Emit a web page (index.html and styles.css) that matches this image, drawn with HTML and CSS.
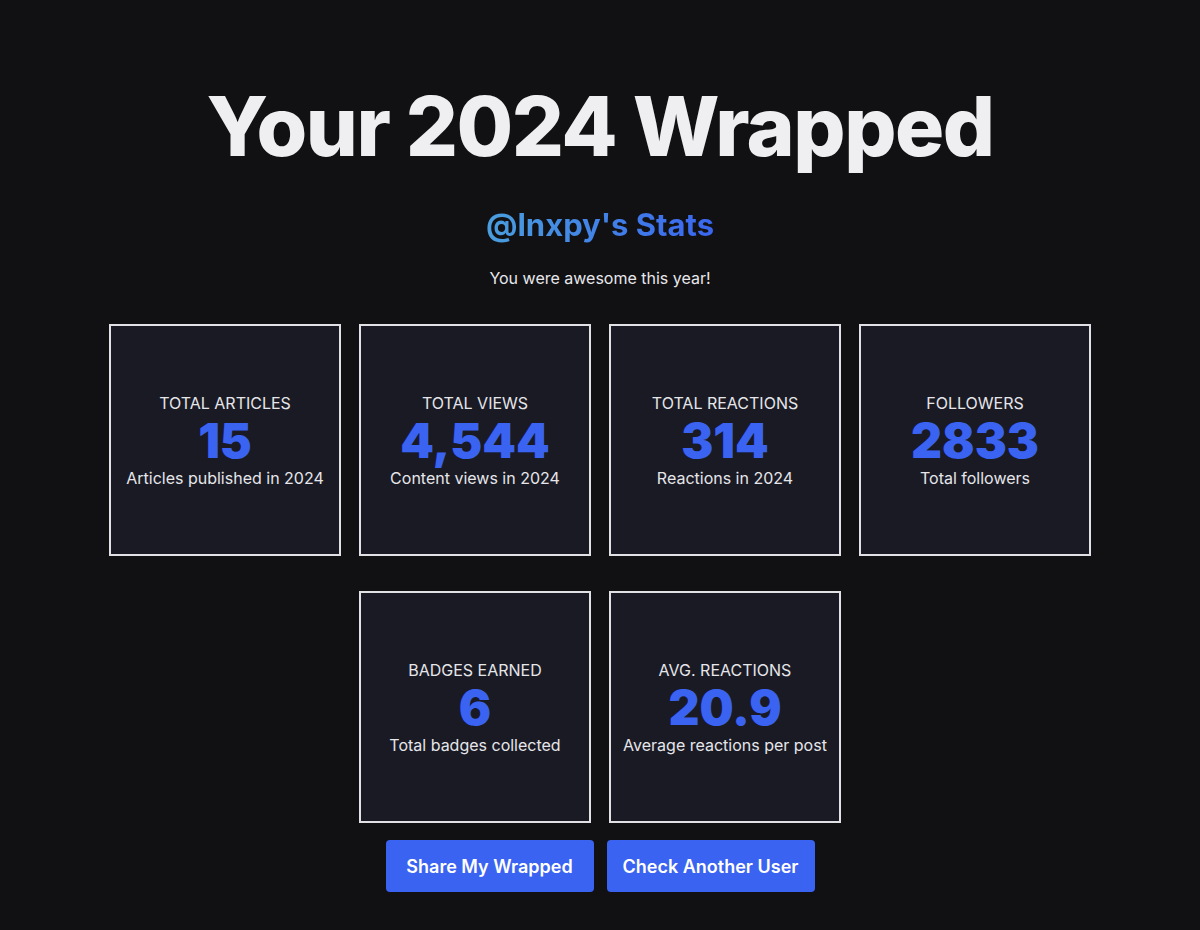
FILE: index.html
```html
<!DOCTYPE html>
<html lang="en">
<head>
    <meta charset="UTF-8">
    <meta name="viewport" content="width=device-width, initial-scale=1.0">
    <title>Your 2024 Wrapped</title>
    <link rel="stylesheet" href="styles.css">
</head>
<body>
    <div class="container">
        <h1 class="title">Your 2024 Wrapped</h1>
        <h2 class="username">@lnxpy's Stats</h2>
        <p class="tagline">You were awesome this year!</p>

        <!-- Stats -->
        <div class="stats">
            <div class="stat-card">
                <div class="stat-label">Total Articles</div>
                <div class="stat-value">15</div>
                <div class="stat-desc">Articles published in 2024</div>
            </div>
            <div class="stat-card">
                <div class="stat-label">Total Views</div>
                <div class="stat-value">4,544</div>
                <div class="stat-desc">Content views in 2024</div>
            </div>
            <div class="stat-card">
                <div class="stat-label">Total Reactions</div>
                <div class="stat-value">314</div>
                <div class="stat-desc">Reactions in 2024</div>
            </div>
            <div class="stat-card">
                <div class="stat-label">Followers</div>
                <div class="stat-value">2833</div>
                <div class="stat-desc">Total followers</div>
            </div>
            <div class="stat-card">
                <div class="stat-label">Badges Earned</div>
                <div class="stat-value">6</div>
                <div class="stat-desc">Total badges collected</div>
            </div>
            <div class="stat-card">
                <div class="stat-label">Avg. Reactions</div>
                <div class="stat-value">20.9</div>
                <div class="stat-desc">Average reactions per post</div>
            </div>
        </div>

        <!-- Actions -->
        <div class="actions">
            <button class="btn">Share My Wrapped</button>
            <button class="btn">Check Another User</button>
        </div>
    </div>
</body>
</html>
```

FILE: styles.css
```css
/* General Styling */
html, body {
    margin: 0;
    height: 100%;
    background-color: #111113;
    color: #ececf0;
    font-family: Inter, "Noto Sans", sans-serif;
}
.container {
    text-align: center;
    padding-top: 78px;
}
.title {
    margin: 0;
    font-size: 82px;
    font-weight: 800;
    letter-spacing: -1.5px;
    line-height: 1.2;
    color: #efeff2;
}
.username {
    display: inline-block;
    margin: 30px 0 0;
    font-size: 31px;
    font-weight: 700;
    background: linear-gradient(90deg, #4a9ede, #3a66f0);
    -webkit-background-clip: text;
    background-clip: text;
    color: transparent;
}
.tagline {
    margin: 25px 0 0;
    font-size: 16px;
    color: #e8e8ec;
}
.stats {
    display: flex;
    flex-wrap: wrap;
    justify-content: center;
    column-gap: 18px;
    row-gap: 35px;
    width: 982px;
    margin: 36px auto 0;
}
.stat-card {
    box-sizing: border-box;
    width: 232px;
    height: 232px;
    border: 2px solid #e2e2e6;
    background-color: #191a24;
    display: flex;
    flex-direction: column;
    justify-content: center;
    align-items: center;
}
.stat-label {
    font-size: 16px;
    line-height: 20px;
    text-transform: uppercase;
    color: #e6e6ea;
}
.stat-value {
    font-size: 48px;
    font-weight: 900;
    line-height: 55px;
    color: #3a63f2;
}
.stat-desc {
    font-size: 16px;
    line-height: 20px;
    color: #e6e6ea;
}
.actions {
    display: flex;
    justify-content: center;
    gap: 13px;
    margin-top: 17px;
}
.btn {
    width: 208px;
    height: 52px;
    border: none;
    border-radius: 4px;
    background-color: #3a63f2;
    color: white;
    font-family: inherit;
    font-size: 18px;
    font-weight: 600;
    cursor: pointer;
}
.btn:hover {
    background-color: #2f55e0;
}
```
